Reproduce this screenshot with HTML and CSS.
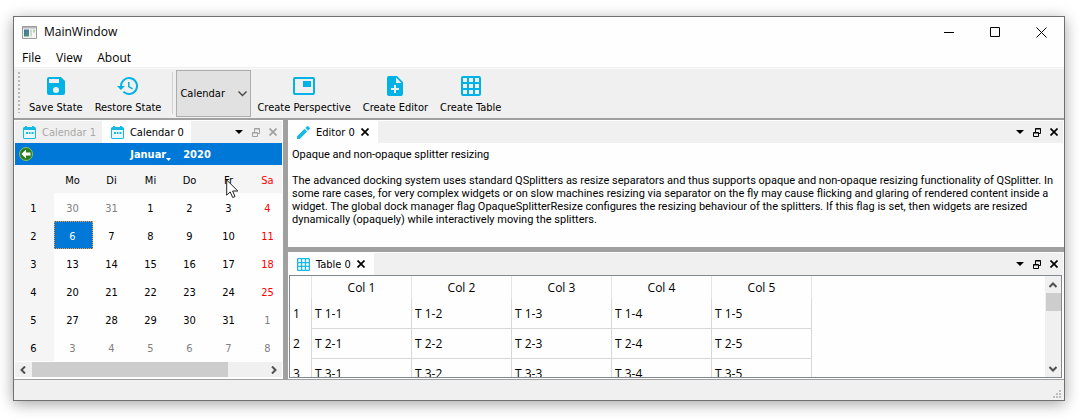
FILE: index.html
```html
<!DOCTYPE html>
<html lang="en">
<head>
<meta charset="utf-8">
<title>MainWindow</title>
<link rel="stylesheet" href="styles.css">
</head>
<body>
<svg class="defs" aria-hidden="true">
  <symbol id="calendar" viewBox="0 0 13 13"><path fill="#19b9e6" d="M2 0h2v1h5V0h2v1h1l1 1v10l-1 1H1l-1-1V2l1-1h1z"/><path fill="#e9f8fd" d="M1 4h11v8H1z"/><path fill="#19b9e6" d="M3 6h2v2H3zM6 6h1.500v2H6zM8.500 6h2v2h-2z"/></symbol>
  <symbol id="grid" viewBox="0 0 20 20"><path fill-rule="evenodd" d="M2 0h16q2 0 2 2v16q0 2-2 2H2q-2 0-2-2V2q0-2 2-2zM2 2v4h4V2zM8 2v4h4V2zM14 2v4h4V2zM2 8v4h4V8zM8 8v4h4V8zM14 8v4h4V8zM2 14v4h4v-4zM8 14v4h4v-4zM14 14v4h4v-4z"/></symbol>
  <symbol id="close" viewBox="0 0 8 8"><path d="M0.500.500l7 7M7.500.500l-7 7" stroke="currentColor" stroke-width="1.700" fill="none"/></symbol>
  <symbol id="down" viewBox="0 0 8 4"><path fill="currentColor" d="M0 0h8L4 4z"/></symbol>
  <symbol id="detach" viewBox="0 0 8 9"><path fill="none" stroke="currentColor" d="M.5 4.500h5v4h-5zM2.500 4V.5h5v5H6M.5 5h5M2.500 1h5"/></symbol>
  <symbol id="chevron" viewBox="0 0 8 6"><path d="M.5 5L4 1.500 7.500 5" stroke="#505050" stroke-width="2" fill="none"/></symbol>
</svg>

<main class="window">
  <header class="titlebar">
    <svg class="appicon" width="15" height="13" viewBox="0 0 15 13"><defs><linearGradient id="pic" x2="1" y2="1"><stop stop-color="#3f6fb5"/><stop offset="1" stop-color="#4e9a5e"/></linearGradient></defs><path fill="#f4f4f4" stroke="#9a9a9a" d="M.5.5h14v12H.5z"/><path fill="#b5b9bd" d="M1 1h13v1.500H1z"/><path fill="url(#pic)" d="M2 3.500h5v7H2z"/><path fill="#d5d5d5" d="M8 3.500h2v7H8z"/><path fill="#a8d5b0" d="M11 3.500h2v3h-2z"/></svg>
    <h1>MainWindow</h1>
    <div class="wincontrols">
      <button aria-label="Minimize"><svg width="11" height="11"><path d="M0 5.500h10" stroke="#000"/></svg></button>
      <button aria-label="Maximize"><svg width="11" height="11"><path d="M.5.5h9v9h-9z" stroke="#000" fill="none"/></svg></button>
      <button aria-label="Close"><svg width="11" height="11"><path d="M.5.5l10 10M10.500.5l-10 10" stroke="#000"/></svg></button>
    </div>
  </header>
  <nav class="menubar"><button>File</button><button>View</button><button>About</button></nav>

  <div class="toolbar">
    <i class="handle"></i>
    <button class="tool"><svg width="24" height="24" viewBox="0 0 24 24"><path d="M17 3H5a2 2 0 0 0-2 2v14a2 2 0 0 0 2 2h14a2 2 0 0 0 2-2V7zM12 19a3 3 0 1 1 0-6 3 3 0 0 1 0 6zM15 9H5V5h10z"/></svg>Save State</button>
    <button class="tool"><svg width="24" height="24" viewBox="0 0 24 24"><path d="M13 3a9 9 0 0 0-9 9H1l3.890 3.890.070.140L9 12H6a7 7 0 1 1 2.060 4.940l-1.420 1.420A9 9 0 1 0 13 3zm-1 5v5l4.280 2.540.720-1.210-3.500-2.080V8z"/></svg>Restore State</button>
    <i class="sep"></i>
    <label class="combo"><select aria-label="Perspective"><option>Calendar</option></select><svg width="9" height="6"><path d="M.5.5l4 4 4-4" stroke="#444" stroke-width="1.300" fill="none"/></svg></label>
    <button class="tool"><svg width="24" height="24" viewBox="0 0 24 24"><path d="M19 7h-8v6h8zm2-4H3a2 2 0 0 0-2 2v14c0 1.100.9 2 2 2h18a2 2 0 0 0 2-2V5a2 2 0 0 0-2-2zm0 16H3V5h18z"/></svg>Create Perspective</button>
    <button class="tool"><svg width="24" height="24" viewBox="0 0 24 24"><path d="M14 2H6a2 2 0 0 0-2 2v16c0 1.100.9 2 2 2h12a2 2 0 0 0 2-2V8zm2 14h-3v3h-2v-3H8v-2h3v-3h2v3h3zm-3-7V3.500L18.500 9z"/></svg>Create Editor</button>
    <button class="tool"><svg width="24" height="24" viewBox="-2 -2 24 24"><use href="#grid" width="20" height="20"/></svg>Create Table</button>
  </div>

  <div class="docks">
    <section class="dock side">
      <div class="tabs">
        <button class="tab off"><svg width="13" height="13"><use href="#calendar"/></svg>Calendar 1</button>
        <button class="tab on"><svg width="13" height="13"><use href="#calendar"/></svg>Calendar 0</button>
        <span class="actions">
          <button aria-label="Tabs"><svg width="8" height="4"><use href="#down"/></svg></button>
          <button class="dim" aria-label="Detach"><svg width="8" height="9"><use href="#detach"/></svg></button>
          <button class="dim" aria-label="Close"><svg width="8" height="8"><use href="#close"/></svg></button>
        </span>
      </div>
      <div class="calendar">
        <div class="calnav">
          <button class="prev" aria-label="Previous month"><svg width="14" height="14" viewBox="0 0 14 14"><circle cx="7" cy="7" r="6.500" fill="#2d7d1e" stroke="#8bbf6a"/><path d="M2.500 7L7 2.500v3h4.500v3H7v3z" fill="#fff"/></svg></button>
          <button class="month">Januar<svg width="5" height="3"><path fill="#fff" d="M0 0h5L2.500 3z"/></svg></button>
          <button>2020</button>
        </div>
        <div class="clip">
        <table class="month-grid">
          <thead><tr><th></th><th>Mo</th><th>Di</th><th>Mi</th><th>Do</th><th>Fr</th><th class="red">Sa</th></tr></thead>
          <tbody>
            <tr><th>1</th><td class="out">30</td><td class="out">31</td><td>1</td><td>2</td><td>3</td><td class="red">4</td></tr>
            <tr><th>2</th><td class="sel">6</td><td>7</td><td>8</td><td>9</td><td>10</td><td class="red">11</td></tr>
            <tr><th>3</th><td>13</td><td>14</td><td>15</td><td>16</td><td>17</td><td class="red">18</td></tr>
            <tr><th>4</th><td>20</td><td>21</td><td>22</td><td>23</td><td>24</td><td class="red">25</td></tr>
            <tr><th>5</th><td>27</td><td>28</td><td>29</td><td>30</td><td>31</td><td class="out">1</td></tr>
            <tr><th>6</th><td class="out">3</td><td class="out">4</td><td class="out">5</td><td class="out">6</td><td class="out">7</td><td class="out">8</td></tr>
          </tbody>
        </table>
        </div>
        <div class="hscroll"><svg class="left" width="8" height="6"><use href="#chevron"/></svg><div class="track"><i></i></div><svg class="right" width="8" height="6"><use href="#chevron"/></svg></div>
        <svg class="pointer" width="13" height="20" viewBox="0 0 13 20"><path d="M.7 1v15.200l3.500-3.300 2.500 5.600 2.300-1-2.400-5.500h5.200z" fill="#fff" stroke="#222"/></svg>
      </div>
    </section>

    <div class="right-col">
      <section class="dock editor">
        <div class="tabs">
          <button class="tab on"><svg width="13" height="13" viewBox="0 0 13 13"><path fill="#19b9e6" d="M0 10.300L7.500 2.800l2.700 2.700L2.700 13H0zM8.300 2L10 .3q.6-.5 1.200 0l1.500 1.500q.5.600 0 1.200L11 4.700z"/></svg>Editor 0<svg class="x" width="8" height="8"><use href="#close"/></svg></button>
          <span class="actions">
            <button aria-label="Tabs"><svg width="8" height="4"><use href="#down"/></svg></button>
            <button aria-label="Detach"><svg width="8" height="9"><use href="#detach"/></svg></button>
            <button aria-label="Close"><svg width="8" height="8"><use href="#close"/></svg></button>
          </span>
        </div>
        <article class="text">
          <p>Opaque and non-opaque splitter resizing</p>
          <p>The advanced docking system uses standard QSplitters as resize separators and thus supports opaque and non-opaque resizing functionality of QSplitter. In some rare cases, for very complex widgets or on slow machines resizing via separator on the fly may cause flicking and glaring of rendered content inside a widget. The global dock manager flag OpaqueSplitterResize configures the resizing behaviour of the splitters. If this flag is set, then widgets are resized dynamically (opaquely) while interactively moving the splitters.</p>
        </article>
      </section>
      <section class="dock tabledock">
        <div class="tabs">
          <button class="tab on"><svg width="13" height="13" fill="#19b9e6"><use href="#grid"/></svg>Table 0<svg class="x" width="8" height="8"><use href="#close"/></svg></button>
          <span class="actions">
            <button aria-label="Tabs"><svg width="8" height="4"><use href="#down"/></svg></button>
            <button aria-label="Detach"><svg width="8" height="9"><use href="#detach"/></svg></button>
            <button aria-label="Close"><svg width="8" height="8"><use href="#close"/></svg></button>
          </span>
        </div>
        <div class="tableview">
          <div class="cells">
            <table class="data">
              <thead><tr><th></th><th>Col 1</th><th>Col 2</th><th>Col 3</th><th>Col 4</th><th>Col 5</th></tr></thead>
              <tbody>
                <tr><th>1</th><td>T 1-1</td><td>T 1-2</td><td>T 1-3</td><td>T 1-4</td><td>T 1-5</td></tr>
                <tr><th>2</th><td>T 2-1</td><td>T 2-2</td><td>T 2-3</td><td>T 2-4</td><td>T 2-5</td></tr>
                <tr><th>3</th><td>T 3-1</td><td>T 3-2</td><td>T 3-3</td><td>T 3-4</td><td>T 3-5</td></tr>
              </tbody>
            </table>
          </div>
          <div class="vscroll"><svg width="8" height="6"><use href="#chevron"/></svg><i></i><svg class="dn" width="8" height="6"><use href="#chevron"/></svg></div>
        </div>
      </section>
    </div>
  </div>
  <footer class="status"><svg width="8" height="8" fill="#bdbdbd"><path d="M6 0h2v2H6zM3 3h2v2H3zM6 3h2v2H6zM0 6h2v2H0zM3 6h2v2H3zM6 6h2v2H6z"/></svg></footer>
</main>
</body>
</html>
```
FILE: styles.css
```css
* { box-sizing: border-box; }
body {
  margin: 0;
  min-height: 100vh;
  padding: 16px 15px 19px 13px;
  display: flex;
  background: #fff;
  color: #000;
  font: 11px/13px "DejaVu Sans Condensed", "DejaVu Sans", sans-serif;
}
svg { display: block; flex: none; }
button, select { font: inherit; color: inherit; background: none; border: 0; padding: 0; margin: 0; }
table { border-collapse: separate; border-spacing: 0; table-layout: fixed; }
th { font-weight: 400; }
.defs { position: absolute; width: 0; height: 0; }

.window {
  flex: 1;
  min-width: 0;
  display: flex;
  flex-direction: column;
  background: #fefefe;
  border: 1px solid #707070;
  box-shadow: 0 3px 14px rgba(0, 0, 0, .36);
}
.titlebar { display: flex; align-items: center; height: 30px; padding-left: 8px; gap: 7px; }
.titlebar h1 { margin: 0; flex: 1; font: 12px/16px "Open Sans", sans-serif; }
.wincontrols { display: flex; }
.wincontrols button { width: 46px; height: 28px; display: flex; align-items: center; justify-content: center; }
.menubar { display: flex; gap: 15px; padding: 2px 8px 0; height: 21px; font: 12px/18px "Open Sans", sans-serif; border-bottom: 1px solid #f0f0f0; }

.toolbar { display: flex; align-items: stretch; height: 52px; padding: 1px 4px; background: #f0f0f0; border-bottom: 2px solid #a0a0a0; border-top: 1px solid #fafafa; }
.handle { width: 2px; margin: 2px 3px 4px 0; background: repeating-linear-gradient(#b8b8b8 0 2px, transparent 2px 4px); }
.tool { display: flex; flex-direction: column; align-items: center; padding: 4px 6px 0; gap: 3px; white-space: nowrap; }
.tool svg { fill: #00b2e6; }
.sep { width: 1px; margin: 2px 3px 3px 5px; background: #d0d0d0; }
.combo { position: relative; width: 75px; height: 47px; }
.combo select { appearance: none; width: 100%; height: 100%; padding: 0 3px; background: #e1e1e1; border: 1px solid #adadad; border-radius: 0; }
.combo svg { position: absolute; right: 4px; top: 21px; }

.docks { flex: 1; display: flex; min-height: 0; background: #a0a0a0; gap: 5px; }
.dock { background: #fefefe; display: flex; flex-direction: column; min-width: 0; }
.side { width: 269px; }
.right-col { flex: 1; min-width: 0; display: flex; flex-direction: column; gap: 5px; }
.tabs { display: flex; height: 22px; margin: 1px 1px 0; background: #f0f0f0; }
.tab { display: flex; align-items: center; gap: 6px; padding: 0 6px 0 8px; border-right: 1px solid #fff; }
.tab.on { background: #fefefe; }
.tab.off { color: #a8a8a8; }
.tab .x { margin-right: 2px; }
.actions { margin-left: auto; display: flex; align-items: center; gap: 9px; padding-right: 5px; }
.dim { color: #a0a0a0; }

.calendar { position: relative; margin: 0 1px 1px; display: flex; flex-direction: column; flex: 1; }
.calnav { display: flex; align-items: center; justify-content: center; gap: 12px; height: 22px; padding-left: 44px; background: #0078d7; color: #fff; font-weight: 700; }
.calnav .prev { position: absolute; left: 4px; }
.month { display: flex; align-items: flex-end; }
.clip { overflow: hidden; flex: 1; }
.month-grid { width: 273px; text-align: center; }
.month-grid th, .month-grid td { padding: 2px 2px 0 0; height: 28px; }
.month-grid th { background: #f5f5f5; }
.month-grid .out { color: #808080; }
.month-grid .red { color: #f00; }
.month-grid .sel { background: #0078d7; color: #fff; outline: 1px dotted #ff9a30; outline-offset: -1px; }
.hscroll { display: flex; align-items: center; height: 15px; margin-bottom: 1px; padding: 0 4px; gap: 5px; background: #f0f0f0; }
.track { flex: 1; height: 15px; }
.track i { display: block; width: 84%; height: 100%; background: #cdcdcd; }
.left { transform: rotate(-90deg); }
.right { transform: rotate(90deg); }
.pointer { position: absolute; left: 211px; top: 36px; }

.editor { flex: 0 0 127px; }
.text { padding: 5px 4px; font-family: Roboto, sans-serif; }
.text p { margin: 0 0 13px; }

.tabledock { flex: 1; min-height: 0; }
.tableview { flex: 1; min-height: 0; display: flex; margin: 0 2px 1px 1px; border: 1px solid #828790; }
.cells { flex: 1; min-width: 0; overflow: hidden; height: 101px; font: 12px/16px "Open Sans", sans-serif; }
.data { width: 522px; }
.data th, .data td { height: 30px; padding: 0 3px; border-right: 1px solid #d8d8d8; border-bottom: 1px solid #d8d8d8; text-align: left; }
.data thead th { height: 23px; text-align: center; border-bottom: 0; border-color: #e5e5e5; }
.data tr th:first-child { width: 22px; border-bottom: 0; text-align: left; }
.vscroll { width: 16px; background: #f0f0f0; display: flex; flex-direction: column; align-items: center; padding: 6px 0 5px; gap: 5px; }
.vscroll i { width: 15px; height: 18px; background: #cdcdcd; }
.dn { margin-top: auto; transform: rotate(180deg); }

.status { height: 21px; border-top: 1px solid #a0a0a0; background: #f0f0f0; display: flex; justify-content: flex-end; align-items: flex-end; padding: 2px 3px; }
```
